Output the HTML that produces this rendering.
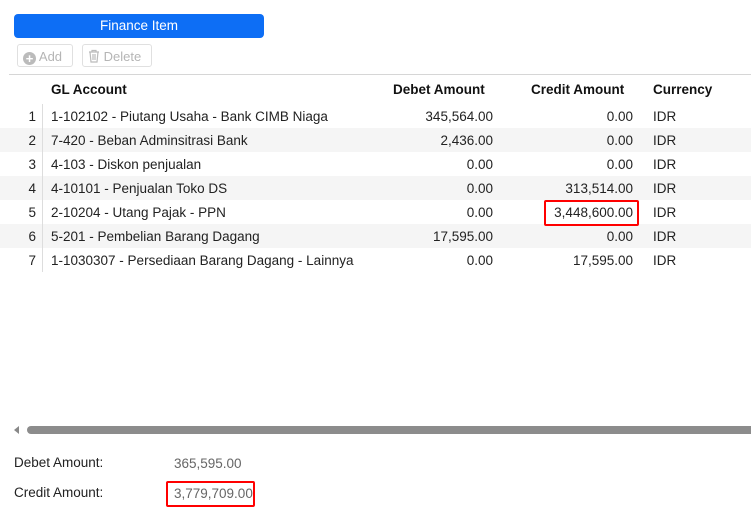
<!DOCTYPE html><html><head><style>
body{margin:0;width:751px;height:510px;background:#fff;font-family:"Liberation Sans",sans-serif;font-size:13.5px;color:#222;position:relative;overflow:hidden}
.a{position:absolute}
.btn{position:absolute;top:44px;height:23px;border:1px solid #e0e0e0;border-radius:3px;color:#b5b5b5;font-size:13px;line-height:23px;box-sizing:border-box}
.row{position:absolute;left:0;width:751px;height:24px;line-height:26px}
.row.g{background:#f5f5f5}
.row span{position:absolute}
.n{left:0;width:36px;text-align:right}
.gl{left:51px}
.d{right:258px}
.c{right:118px}
.cu{left:653px}
.h{font-weight:bold;color:#111}
</style></head><body>
<div class="a" style="left:14px;top:14px;width:250px;height:24px;background:#0d6ef5;border-radius:4px;color:#fff;text-align:center;line-height:24px;font-size:13.5px">Finance Item</div>
<div class="btn" style="left:17px;width:56px;padding-left:5px"><span style="display:inline-block;width:13px;height:13px;border-radius:50%;background:#bbb;color:#fff;font-size:13px;line-height:13px;text-align:center;font-weight:bold;vertical-align:-2px">+</span> Add</div>
<div class="btn" style="left:82px;width:70px;padding-left:5px"><svg width="12" height="14" viewBox="0 0 12 14" style="vertical-align:-2px"><path d="M1 3h10M4 3V1.5h4V3M2 3l1 10h6l1-10M5 5v6M7 5v6" stroke="#bbb" fill="none" stroke-width="1.2"/></svg> Delete</div>
<div class="a" style="left:9px;top:74px;width:742px;height:1px;background:#d6d6d6"></div>
<div class="row h" style="top:77px"><span class="gl">GL Account</span><span style="left:393px">Debet Amount</span><span style="left:531px">Credit Amount</span><span class="cu">Currency</span></div>
<div class="row" style="top:104px"><span class="n">1</span><span class="gl">1-102102 - Piutang Usaha - Bank CIMB Niaga</span><span class="d">345,564.00</span><span class="c">0.00</span><span class="cu">IDR</span></div>
<div class="row g" style="top:128px"><span class="n">2</span><span class="gl">7-420 - Beban Adminsitrasi Bank</span><span class="d">2,436.00</span><span class="c">0.00</span><span class="cu">IDR</span></div>
<div class="row" style="top:152px"><span class="n">3</span><span class="gl">4-103 - Diskon penjualan</span><span class="d">0.00</span><span class="c">0.00</span><span class="cu">IDR</span></div>
<div class="row g" style="top:176px"><span class="n">4</span><span class="gl">4-10101 - Penjualan Toko DS</span><span class="d">0.00</span><span class="c">313,514.00</span><span class="cu">IDR</span></div>
<div class="row" style="top:200px"><span class="n">5</span><span class="gl">2-10204 - Utang Pajak - PPN</span><span class="d">0.00</span><span class="c">3,448,600.00</span><span class="cu">IDR</span></div>
<div class="row g" style="top:224px"><span class="n">6</span><span class="gl">5-201 - Pembelian Barang Dagang</span><span class="d">17,595.00</span><span class="c">0.00</span><span class="cu">IDR</span></div>
<div class="row" style="top:248px"><span class="n">7</span><span class="gl">1-1030307 - Persediaan Barang Dagang - Lainnya</span><span class="d">0.00</span><span class="c">17,595.00</span><span class="cu">IDR</span></div>
<div class="a" style="left:42px;top:104px;width:1px;height:168px;background:#ddd"></div>
<div class="a" style="left:544px;top:200px;width:91px;height:22px;border:2px solid #f00;border-radius:2px"></div>
<div class="a" style="left:14px;top:426px;width:0;height:0;border-top:4px solid transparent;border-bottom:4px solid transparent;border-right:5px solid #888"></div>
<div class="a" style="left:27px;top:426px;width:730px;height:8px;background:#8c8c8c;border-radius:4px"></div>
<div class="a" style="left:14px;top:455px">Debet Amount:</div>
<div class="a" style="left:174px;top:456px;color:#666">365,595.00</div>
<div class="a" style="left:14px;top:485px">Credit Amount:</div>
<div class="a" style="left:166px;top:481px;width:85px;height:22px;border:2px solid #f00;border-radius:2px"></div>
<div class="a" style="left:174px;top:486px;color:#666">3,779,709.00</div>
</body></html>
